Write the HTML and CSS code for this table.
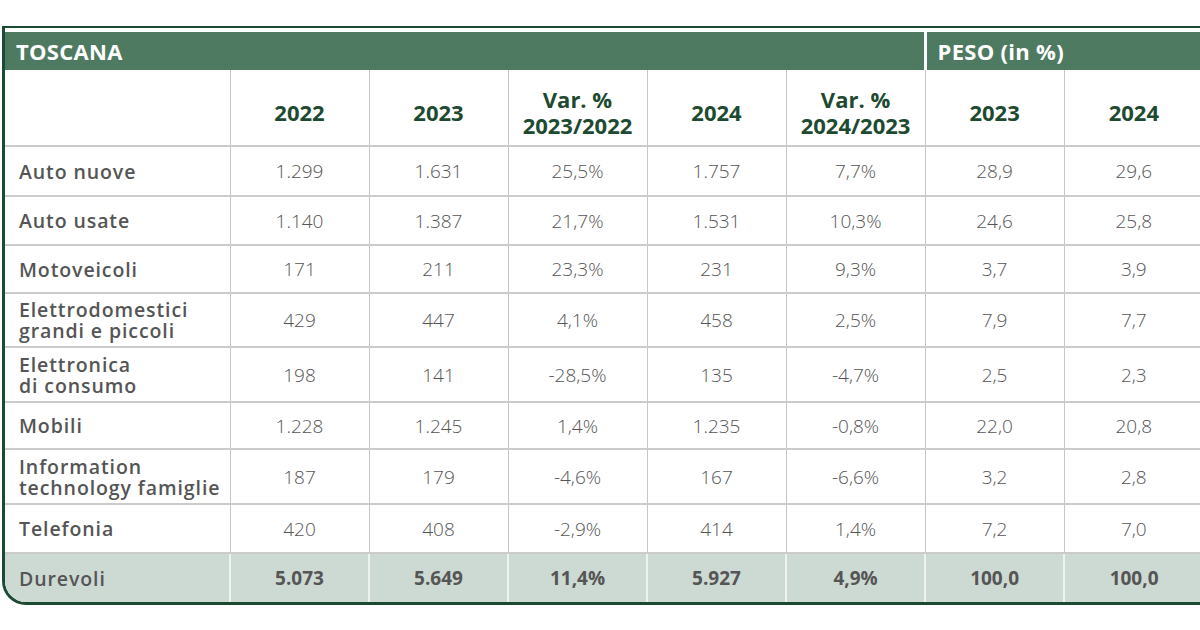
FILE: index.html
```html
<!DOCTYPE html>
<html lang="it">
<head>
<meta charset="utf-8">
<title>Toscana</title>
<link rel="stylesheet" href="styles.css">
</head>
<body>
<div class="frame">
  <table class="tbl">
    <colgroup>
      <col class="c-label">
      <col class="c-num"><col class="c-num"><col class="c-num"><col class="c-num"><col class="c-num"><col class="c-num"><col class="c-num">
    </colgroup>
    <thead>
      <tr class="band">
        <th colspan="6" class="band-main">TOSCANA</th>
        <th colspan="2" class="band-peso">PESO (in %)</th>
      </tr>
      <tr class="heads">
        <th class="first"></th>
        <th>2022</th>
        <th>2023</th>
        <th>Var. %<br>2023/2022</th>
        <th>2024</th>
        <th>Var. %<br>2024/2023</th>
        <th>2023</th>
        <th>2024</th>
      </tr>
    </thead>
    <tbody>
      <tr class="r50"><td class="lbl">Auto nuove</td><td>1.299</td><td>1.631</td><td>25,5%</td><td>1.757</td><td>7,7%</td><td>28,9</td><td>29,6</td></tr>
      <tr class="r49"><td class="lbl">Auto usate</td><td>1.140</td><td>1.387</td><td>21,7%</td><td>1.531</td><td>10,3%</td><td>24,6</td><td>25,8</td></tr>
      <tr class="r48"><td class="lbl">Motoveicoli</td><td>171</td><td>211</td><td>23,3%</td><td>231</td><td>9,3%</td><td>3,7</td><td>3,9</td></tr>
      <tr class="r54"><td class="lbl">Elettrodomestici<br>grandi e piccoli</td><td>429</td><td>447</td><td>4,1%</td><td>458</td><td>2,5%</td><td>7,9</td><td>7,7</td></tr>
      <tr class="r55"><td class="lbl">Elettronica<br>di consumo</td><td>198</td><td>141</td><td>-28,5%</td><td>135</td><td>-4,7%</td><td>2,5</td><td>2,3</td></tr>
      <tr class="r47"><td class="lbl">Mobili</td><td>1.228</td><td>1.245</td><td>1,4%</td><td>1.235</td><td>-0,8%</td><td>22,0</td><td>20,8</td></tr>
      <tr class="r55"><td class="lbl">Information<br>technology famiglie</td><td>187</td><td>179</td><td>-4,6%</td><td>167</td><td>-6,6%</td><td>3,2</td><td>2,8</td></tr>
      <tr class="r49"><td class="lbl">Telefonia</td><td>420</td><td>408</td><td>-2,9%</td><td>414</td><td>1,4%</td><td>7,2</td><td>7,0</td></tr>
      <tr class="total"><td class="lbl">Durevoli</td><td>5.073</td><td>5.649</td><td>11,4%</td><td>5.927</td><td>4,9%</td><td>100,0</td><td>100,0</td></tr>
    </tbody>
  </table>
</div>
</body>
</html>
```

FILE: styles.css
```css
html, body {
  margin: 0;
  padding: 0;
  background: #ffffff;
}

body {
  font-family: "Open Sans", "Noto Sans", sans-serif;
  overflow: hidden;
}

.frame {
  margin: 26px 0 0 2px;
  width: 1230px;
  padding-top: 4px;
  border-top: 2px solid #1d4a33;
  border-left: 3px solid #1d4a33;
  border-bottom: 3px solid #1d4a33;
  border-bottom-left-radius: 24px;
  overflow: hidden;
}

.tbl {
  border-collapse: collapse;
  table-layout: fixed;
  width: 1198px;
}

.c-label { width: 225px; }
.c-num { width: 139px; }

.band th {
  height: 38px;
  padding: 0;
  background: #4f7a62;
  color: #ffffff;
  font-weight: 700;
  font-size: 22px;
  letter-spacing: 0.3px;
  text-align: left;
  vertical-align: middle;
}

.band-main { padding-left: 11px !important; }

.band-peso {
  padding-left: 11px !important;
  border-left: 3px solid #ffffff;
}

.heads th {
  height: 76px;
  padding: 8px 0 0 0;
  box-sizing: border-box;
  color: #1d4a30;
  font-weight: 700;
  font-size: 22px;
  line-height: 26px;
  text-align: center;
  vertical-align: middle;
  border-left: 1px solid #c6c6c6;
  border-bottom: 2px solid #cbcbcb;
}

.heads th.first { border-left: none; }

tbody td {
  padding: 0;
  text-align: center;
  vertical-align: middle;
  font-size: 19px;
  font-weight: 300;
  color: #555555;
  border-left: 1px solid #c6c6c6;
  border-bottom: 2px solid #cbcbcb;
}

tbody td.lbl {
  border-left: none;
  text-align: left;
  padding-left: 14px;
  font-weight: 600;
  font-size: 19.5px;
  line-height: 21px;
  letter-spacing: 0.9px;
  color: #555555;
}

.r47 td { height: 45px; }
.r48 td { height: 46px; }
.r49 td { height: 47px; }
.r50 td { height: 48px; }
.r54 td { height: 52px; }
.r55 td { height: 53px; }

.total td {
  height: 48px;
  background: #cdd9d3;
  font-weight: 700;
  border-bottom: none;
  border-left: 2px solid #eef2f0;
}

.total td.lbl {
  border-left: none;
  font-weight: 600;
}
```
